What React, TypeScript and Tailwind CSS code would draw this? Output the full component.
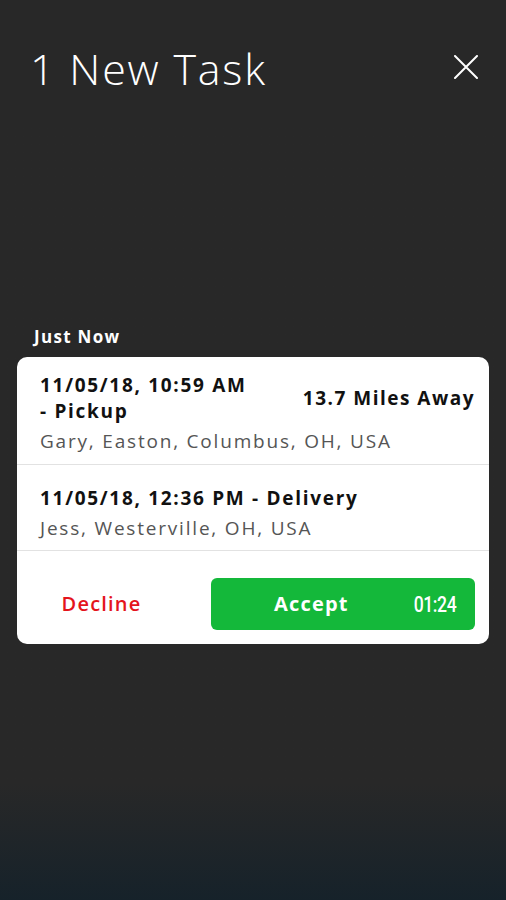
const stops = [
  {
    id: 'pickup',
    lines: ['11/05/18, 10:59 AM', '- Pickup'],
    address: 'Gary, Easton, Columbus, OH, USA',
    distance: '13.7 Miles Away',
    pad: 'pt-[15px] pb-[10px]',
  },
  {
    id: 'delivery',
    lines: ['11/05/18, 12:36 PM - Delivery'],
    address: 'Jess, Westerville, OH, USA',
    distance: '',
    pad: 'pt-[20px] pb-[9px]',
  },
];

export default function App() {
  return (
    <div
      className="w-[506px] h-[900px] flex flex-col bg-gradient-to-b from-[#282828] from-87% to-[#16222a] text-white"
      style={{ fontFamily: '"Open Sans", "Liberation Sans", sans-serif' }}
    >
      {/* Header */}
      <div className="flex items-center justify-between pl-[30px] pr-[28px] pt-[38px] h-[98px]">
        <h1 className="text-[43px] font-light leading-none tracking-[1.8px]">1 New Task</h1>
        {/* close glyph */}
        <svg width="24" height="24" viewBox="0 0 24 24" className="mt-[-2px]" aria-hidden="true">
          <path d="M1 1 L23 23 M23 1 L1 23" stroke="white" strokeWidth="2" strokeLinecap="round" />
        </svg>
      </div>

      <div className="h-[230px]" />

      <div className="px-[34px] text-[17px] font-bold leading-none tracking-[1.3px]">Just Now</div>

      {/* Task card */}
      <div className="mx-[17px] mt-[12px] rounded-[10px] bg-white text-[#111] overflow-hidden">
        {stops.map((stop) => (
          <div key={stop.id} className={`border-b border-[#e2e2e2] pl-[23px] pr-[22px] ${stop.pad}`}>
            <div className="flex items-center justify-between gap-2">
              <div className="text-[19px] font-bold leading-[26px] tracking-[1.7px]">
                {stop.lines.map((line) => (
                  <div key={line}>{line}</div>
                ))}
              </div>
              {stop.distance && (
                <div className="text-[19px] font-bold leading-[26px] tracking-[1.5px] mr-[-8px]">{stop.distance}</div>
              )}
            </div>
            <div className="mt-[4px] text-[19px] leading-[26px] text-[#555] tracking-[1.8px]">{stop.address}</div>
          </div>
        ))}

        <div className="flex items-center pr-[14px] pt-[27px] pb-[14px]">
          <button className="w-[169px] text-[20px] font-semibold text-[#e4141c] text-center tracking-[1.2px]">
            Decline
          </button>
          <button className="ml-[25px] flex-1 h-[52px] rounded-[6px] bg-[#14b83a] flex items-center pl-[63px] pr-[19px] text-white">
            <span className="text-[20px] font-bold tracking-[1.2px]">Accept</span>
            <span
              className="ml-auto text-[22px] font-medium tracking-[-0.5px] scale-x-80 origin-right"
              style={{ fontFamily: 'Roboto, sans-serif' }}
            >
              01:24
            </span>
          </button>
        </div>
      </div>
    </div>
  );
}
